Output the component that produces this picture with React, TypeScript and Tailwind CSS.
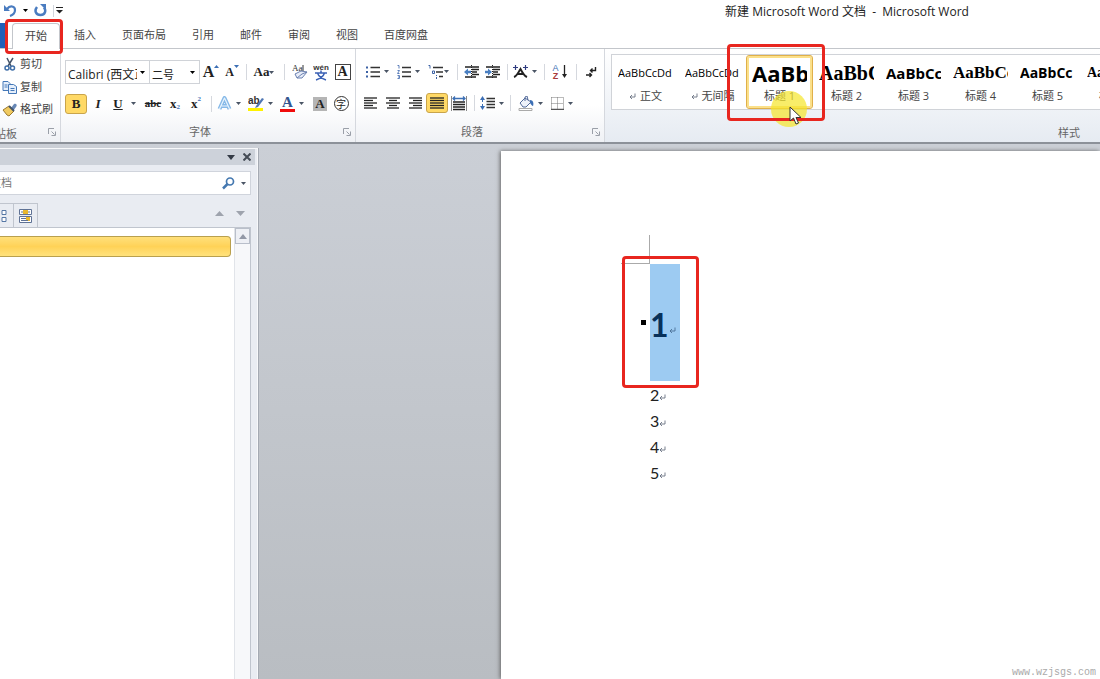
import type { ReactNode } from 'react'
import clsx from 'clsx'

const Arrow = ({ className = 'text-gray-600' }: { className?: string }) => (
  <svg width="5" height="3" viewBox="0 0 5 3" className={clsx('shrink-0', className)}>
    <path d="M0 0h5L2.5 3z" fill="currentColor" />
  </svg>
)

const Return = ({ className }: { className?: string }) => (
  <svg width="7" height="7" viewBox="0 0 7 7" fill="none" stroke="currentColor" className={className}>
    <path d="M6 0.500v3.500H1M3 2L1 4l2 2" strokeWidth="0.900" />
  </svg>
)

const Separator = ({ className }: { className: string }) => (
  <div className={clsx('flex shrink-0 justify-center', className)}>
    <div className="h-4 w-px bg-[#d5d8de]" />
  </div>
)

type ToolProps = {
  label: string
  width: string
  arrow?: boolean
  active?: boolean
  children: ReactNode
}

const Tool = ({ label, width, arrow, active, children }: ToolProps) => (
  <button
    type="button"
    aria-label={label}
    className={clsx(
      'flex h-5 shrink-0 items-center justify-center font-["Liberation_Serif",serif] text-[#222]',
      arrow ? 'gap-1' : '',
      active ? 'rounded-[3px] border border-[#c9a44b] bg-[#ffd966]' : '',
      width
    )}
  >
    {children}
    {arrow && <Arrow />}
  </button>
)

const Launcher = ({ label }: { label: string }) => (
  <button type="button" aria-label={label} className="absolute right-1 bottom-1.5">
    <svg width="8" height="8" viewBox="0 0 8 8" fill="none" stroke="#9a9fa8">
      <path d="M0.500 6V0.500H6M3.500 3.500l3 3M7.500 3.500v4h-4" />
    </svg>
  </button>
)

const Lines = ({ rows }: { rows: number[][] }) => (
  <svg width="14" height="12" viewBox="0 0 14 12" stroke="#222" strokeWidth="1.3">
    {rows.map(([from, to], i) => (
      <path key={i} d={`M${from} ${i * 2.5 + 1}H${to}`} />
    ))}
  </svg>
)

const full = [[0, 14], [0, 14], [0, 14], [0, 14], [0, 14]]

const Indent = ({ out }: { out?: boolean }) => (
  <svg width="16" height="14" viewBox="0 0 16 14">
    <path d="M1 2h14M8 4.500h7M8 7h5M8 9.500h7M1 12h11" stroke="#222" strokeWidth="1.500" />
    <path d={out ? 'M0 7l4-3.5v2.3h3v2.4H4v2.3z' : 'M7 7L3 3.5v2.3H0v2.4h3v2.3z'} fill="#4a7fc1" />
    <path d="M7.500 0v14" stroke="#222" strokeDasharray="1 1" />
  </svg>
)

const RedFrame = ({ className }: { className: string }) => (
  <div className={clsx('pointer-events-none absolute z-10 rounded border-3 border-[#e8261f]', className)} />
)

const tabs = ['插入', '页面布局', '引用', '邮件', '审阅', '视图', '百度网盘']

const styles = [
  { name: '正文', mark: true, sample: 'AaBbCcDd', font: 'text-[11px]' },
  { name: '无间隔', mark: true, sample: 'AaBbCcDd', font: 'text-[11px]' },
  { name: '标题 1', sample: 'AaBb', font: 'text-[22px] font-bold', selected: true },
  { name: '标题 2', sample: 'AaBbC', font: 'text-xl font-bold font-["Liberation_Serif",serif]' },
  { name: '标题 3', sample: 'AaBbCc', font: 'text-[15px] font-bold' },
  { name: '标题 4', sample: 'AaBbCc', font: 'text-[17px] font-bold font-["Liberation_Serif",serif]' },
  { name: '标题 5', sample: 'AaBbCc', font: 'text-sm font-bold' },
  { name: '标题 6', sample: 'AaBbCc', font: 'text-sm font-bold font-["Liberation_Serif",serif]' },
]

const TitleBar = () => (
  <header className="flex h-[23px] items-center">
    <div className="flex w-[594px] shrink-0 items-center pb-0.5 pl-1">
      <button type="button" aria-label="撤消" className="flex items-center gap-1.5">
        <svg width="13" height="13" viewBox="0 0 13 13" fill="none" stroke="#4a7cc0" strokeWidth="2.200">
          <path d="M3 5c3-4 8-3 8 1 0 3-2 5-5 6" />
          <path d="M0 1v6h6z" fill="#4a7cc0" stroke="none" />
        </svg>
        <Arrow className="text-black" />
      </button>
      <button type="button" aria-label="恢复" className="ml-1.5">
        <svg width="13" height="13" viewBox="0 0 13 13" fill="none" stroke="#4a7cc0" strokeWidth="2.500">
          <path d="M3 3c-3 4-1 8 3.500 8s6-4 3.500-7.500" />
          <path d="M6 0h6v6z" fill="#4a7cc0" stroke="none" />
        </svg>
      </button>
      <div className="mr-0.5 ml-1.5 h-3 w-px bg-gray-300" />
      <button type="button" aria-label="自定义快速访问工具栏">
        <svg width="7" height="7" viewBox="0 0 7 7">
          <path d="M0 0.500h7" stroke="#222" />
          <path d="M0 3h7L3.500 6.500z" fill="#222" />
        </svg>
      </button>
    </div>
    <h1 className="flex-1 text-center text-xs whitespace-pre text-[#222]">
      新建 Microsoft Word 文档  -  Microsoft Word
    </h1>
  </header>
)

const Tabs = () => (
  <nav className="flex h-[26px] items-stretch border-b border-[#c3c6cb] text-[11px] text-[#444]">
    <button type="button" aria-label="文件" className="-ml-12 w-14 bg-[#2160b8]" />
    <div className="relative -mb-px ml-1 flex w-12 justify-center rounded-t border border-b-0 border-[#c3c6cb] bg-white">
      <button type="button">开始</button>
      <RedFrame className="-top-[5px] -right-1 -bottom-[5px] -left-2" />
    </div>
    <div className="ml-3.5 flex gap-[26px]">
      {tabs.map((tab) => (
        <button type="button" key={tab}>{tab}</button>
      ))}
    </div>
  </nav>
)

const Clipboard = () => (
  <section className="relative flex w-[61px] shrink-0 flex-col border-r border-[#d5d8de] pt-1 text-[11px] text-[#444]">
    <button type="button" className="flex h-[23px] items-center gap-1 pl-1 whitespace-nowrap">
      <svg width="12" height="14" viewBox="0 0 12 14" fill="none" stroke="#3f6ea8" strokeWidth="1.500">
        <path d="M3 1l4 8M9 1L4 9" stroke="#44546a" />
        <circle cx="3" cy="11" r="2" />
        <circle cx="8.500" cy="11" r="2" />
      </svg>
      剪切
    </button>
    <button type="button" className="flex h-[23px] items-center gap-0.5 pl-0.5 whitespace-nowrap">
      <svg width="16" height="14" viewBox="0 0 16 14" fill="#e6effb" stroke="#4478b8">
        <path d="M1 1.500h5l2 2v7H1z" />
        <path d="M6.500 4.500h5l3 2v7h-8z" />
        <path d="M2.500 5h3M2.500 7h3M8.500 8.500h4M8.500 10.500h4" />
      </svg>
      复制
    </button>
    <button type="button" className="flex h-[23px] items-center gap-0.5 pl-0.5 whitespace-nowrap">
      <svg width="16" height="14" viewBox="0 0 16 14">
        <path d="M9 5l3-4c1-1 4 0 2 3l-3 4z" fill="#6787b5" />
        <path d="M1 7l6-4 5 5-5 5-2-1z" fill="#f0ca60" stroke="#9b7930" />
        <path d="M7 3l5 5" stroke="#44546a" strokeWidth="2" />
      </svg>
      格式刷
    </button>
    <div className="-ml-4 pt-[5px] leading-4 text-[#666]">剪贴板</div>
    <Launcher label="剪贴板选项" />
  </section>
)

const FontGroup = () => (
  <section className="relative flex w-[295px] shrink-0 flex-col border-r border-[#d5d8de] pt-[11px] pl-1">
    <div className="flex h-6 items-center">
      <div className="relative h-6 w-[85px] border border-[#d0d3d8]">
        <select aria-label="字体" className="h-full w-full appearance-none overflow-hidden pr-3 pb-1 pl-0.5 text-xs text-[#222] outline-none">
          <option>Calibri (西文正文)</option>
        </select>
        <Arrow className="absolute top-2.5 right-1" />
      </div>
      <div className="relative h-6 w-[50px] border border-l-0 border-[#d0d3d8]">
        <select aria-label="字号" className="h-full w-full appearance-none pr-3 pb-1 pl-0.5 text-[11px] text-[#222] outline-none">
          <option>二号</option>
        </select>
        <Arrow className="absolute top-2.5 right-1" />
      </div>
      <Tool label="增大字体" width="w-[22px]">
        <b className="text-base">A</b>
        <Arrow className="mb-3 rotate-180 text-[#3c6fb5]" />
      </Tool>
      <Tool label="缩小字体" width="w-5">
        <b className="text-xs">A</b>
        <Arrow className="mb-3 text-[#3c6fb5]" />
      </Tool>
      <Separator className="w-2" />
      <Tool label="更改大小写" width="w-7" arrow><b className="-mr-1 text-[13px]">Aa</b></Tool>
      <Separator className="w-3" />
      <Tool label="清除格式" width="w-5">
        <svg width="16" height="16" viewBox="0 0 16 16">
          <text x="0" y="7" fontSize="9" fontFamily="Liberation Serif" fill="#333">Aa</text>
          <path d="M11 1v6" stroke="#333" />
          <path d="M3 10l6-3 6 1-5 6-5 0z" fill="#e8edf8" stroke="#6a80b0" />
          <path d="M5 14l5-4 5-2" stroke="#6a80b0" fill="none" />
        </svg>
      </Tool>
      <Tool label="拼音指南" width="w-[22px]">
        <svg width="16" height="17" viewBox="0 0 16 17">
          <text x="8" y="6" textAnchor="middle" fontSize="8" fontWeight="bold" fontFamily="Liberation Sans" fill="#333">wén</text>
          <path d="M2 9h12M8 6.500V9M4.500 9c1 3 4 5.500 8.500 7M11.500 9c-1 3-4 5.500-8.500 7" fill="none" stroke="#3c62b5" strokeWidth="1.500" />
        </svg>
      </Tool>
      <Tool label="字符边框" width="w-[21px]">
        <b className="h-4 w-4 border border-[#444] text-sm leading-[14px]">A</b>
      </Tool>
    </div>
    <div className="mt-2 flex h-6 items-center text-[13px]">
      <Tool label="加粗" width="w-[22px]" active><b>B</b></Tool>
      <Tool label="倾斜" width="w-[22px]"><b className="italic">I</b></Tool>
      <Tool label="下划线" width="w-[31px]" arrow><b className="mr-1 underline">U</b></Tool>
      <Tool label="删除线" width="w-[26px]"><b className="text-[11px] line-through">abc</b></Tool>
      <Tool label="下标" width="w-[18px]">
        <b>x</b><span className="mt-2 text-[7px] font-bold text-[#3c6fb5]">2</span>
      </Tool>
      <Tool label="上标" width="w-6">
        <b>x</b><span className="mb-2 text-[7px] font-bold text-[#3c6fb5]">2</span>
      </Tool>
      <Separator className="w-1.5" />
      <Tool label="文本效果" width="w-[30px]" arrow>
        <svg width="15" height="15" viewBox="0 0 14 15" fill="none" strokeLinejoin="round">
          <path d="M2 13L7 2l5 11M4 10h6" stroke="#86b9e8" strokeWidth="4" />
          <path d="M2 13L7 2l5 11M4 10h6" stroke="#e8f4fd" strokeWidth="1.200" />
        </svg>
      </Tool>
      <Tool label="突出显示" width="w-8" arrow>
        <svg width="16" height="16" viewBox="0 0 16 16">
          <path d="M0 12h15v3H0z" fill="#fff200" />
          <text x="0" y="8" fontSize="10" fontWeight="bold" fontFamily="Liberation Sans" fill="#333">ab</text>
          <path d="M8 10l6-8 2 1-6 8-3 1z" fill="#5077b3" />
        </svg>
      </Tool>
      <Tool label="字体颜色" width="w-8" arrow>
        <span className="border-b-3 border-[#f00c0c] px-0.5 text-[15px] leading-[13px] font-bold text-[#32558f]">A</span>
      </Tool>
      <Tool label="字符底纹" width="w-6">
        <b className="h-3.5 w-3.5 bg-[#b5b5b5] leading-[14px]">A</b>
      </Tool>
      <Tool label="带圈字符" width="w-[18px]">
        <span className="h-[15px] w-[15px] rounded-full border border-[#333] font-['Noto_Sans_CJK_SC',sans-serif] text-[10px] leading-[13px]">字</span>
      </Tool>
    </div>
    <div className="pt-[7px] text-center text-[11px] leading-5 text-[#666]">
      <span className="mr-5">字体</span>
    </div>
    <Launcher label="字体选项" />
  </section>
)

const ParagraphGroup = () => (
  <section className="relative flex w-[249px] shrink-0 flex-col border-r border-[#d5d8de] pt-[11px] pl-1">
    <div className="flex h-6 items-center pl-0.5">
      <Tool label="项目符号" width="w-[30px]" arrow>
        <svg width="14" height="12" viewBox="0 0 14 12">
          <path d="M4.500 1.500h9.500M4.500 6h9.500M4.500 10.500h9.500" stroke="#333" strokeWidth="1.300" />
          <path d="M0 0.500h2v2H0zM0 5h2v2H0zM0 9.500h2v2H0z" fill="#3c62a5" />
        </svg>
      </Tool>
      <Tool label="编号" width="w-8" arrow>
        <svg width="14" height="14" viewBox="0 0 14 14">
          <path d="M5 2.500h9M5 7h9M5 11.500h9" stroke="#333" strokeWidth="1.300" />
          <path d="M0.500 0.500H2v3M0.500 5.500H2.500L0.500 8.500h2M0.500 10.500h2v3h-2M1 12h1.500" stroke="#5c7fba" fill="none" />
        </svg>
      </Tool>
      <Tool label="多级列表" width="w-7" arrow>
        <svg width="16" height="14" viewBox="0 0 16 14" className="-mr-1 shrink-0">
          <path d="M5 2.500h10M8 7h7M11 11.500h4" stroke="#333" strokeWidth="1.300" />
          <path d="M0.500 0.500H2v3M4.500 6h2v2.500h-2zM8.500 10v1M8.500 12v2" stroke="#3c62a5" fill="none" />
        </svg>
      </Tool>
      <Separator className="w-2.5" />
      <Tool label="减少缩进量" width="w-5"><Indent out /></Tool>
      <Tool label="增加缩进量" width="w-[22px]"><Indent /></Tool>
      <Separator className="w-1.5" />
      <Tool label="中文版式" width="w-[30px]" arrow>
        <svg width="15" height="13" viewBox="0 0 15 13" fill="none" stroke="#222" strokeWidth="1.900">
          <path d="M1 12c3-1 4-4 6.500-8 2 4 4 7 6.500 8M4.500 9h6" />
          <path d="M0 2.500h5M2.500 0v5M10 2.500h5M12.500 0v5" stroke="#303c80" strokeWidth="1.200" />
        </svg>
      </Tool>
      <Separator className="w-2" />
      <Tool label="排序" width="w-6">
        <span className="flex flex-col font-['Liberation_Sans',sans-serif] text-[9px] leading-[8px]">
          <span className="text-[#3c6fb5]">A</span>
          <span className="font-bold text-[#a83c3c]">Z</span>
        </span>
        <svg width="7" height="14" viewBox="0 0 7 14" className="ml-0.5">
          <path d="M3.500 0v11" stroke="#222" strokeWidth="1.300" />
          <path d="M1 9h5l-2.500 4z" fill="#222" />
        </svg>
      </Tool>
      <Separator className="w-2" />
      <Tool label="显示编辑标记" width="w-[22px]">
        <svg width="11" height="12" viewBox="0 0 11 12" fill="none" stroke="#222" strokeWidth="1.400">
          <path d="M9.500 1v3.500H5M6.500 2.500l-2 2 2 2M0 9h5M3.500 7l2 2-2 2" />
        </svg>
      </Tool>
    </div>
    <div className="mt-2 flex h-6 items-center">
      <Tool label="左对齐" width="w-[22px]"><Lines rows={[[0, 13], [0, 9], [0, 13], [0, 9], [0, 13]]} /></Tool>
      <Tool label="居中" width="w-[22px]"><Lines rows={[[0, 14], [3, 11], [0, 14], [3, 11], [1, 13]]} /></Tool>
      <Tool label="右对齐" width="w-[22px]"><Lines rows={[[1, 14], [5, 14], [1, 14], [5, 14], [1, 14]]} /></Tool>
      <Tool label="两端对齐" width="w-[22px]" active><Lines rows={full} /></Tool>
      <Tool label="分散对齐" width="w-[22px]">
        <svg width="16" height="15" viewBox="0 0 16 15" fill="none">
          <path d="M2 6h12M2 8.500h12M2 11h12M2 13.500h12" stroke="#222" strokeWidth="1.300" />
          <path d="M0.500 0v15M15.500 0v15" stroke="#888" />
          <path d="M2 2.500h12M4 0.500l-2 2 2 2M12 0.500l2 2-2 2" stroke="#3c6fb5" strokeWidth="1.300" />
        </svg>
      </Tool>
      <Separator className="w-2" />
      <Tool label="行距" width="w-7" arrow>
        <svg width="15" height="14" viewBox="0 0 15 14">
          <path d="M6.500 2.500H15M6.500 5.500H15M6.500 8.500H15M6.500 11.500H15" stroke="#333" strokeWidth="1.300" />
          <path d="M2.500 2v10" stroke="#3c6fb5" strokeDasharray="4 2" />
          <path d="M0 4l2.500-4L5 4zM0 10l2.500 4L5 10z" fill="#3c6fb5" />
        </svg>
      </Tool>
      <Separator className="w-2" />
      <Tool label="底纹" width="w-8" arrow>
        <svg width="16" height="15" viewBox="0 0 16 15">
          <path d="M2 7l5-5 6 4-5 5H5z" fill="#eef2fa" stroke="#526a9a" />
          <path d="M7 5V1l2-1 1 4" fill="none" stroke="#526a9a" />
          <path d="M12 4c3 0 4 3 3 6-1 0-2-2-3-3z" fill="#3c6fb5" />
          <path d="M1 12.500h13v2H1z" fill="#fff" stroke="#aaa" />
        </svg>
      </Tool>
      <Tool label="边框" width="w-8" arrow>
        <svg width="13" height="13" viewBox="0 0 13 13" stroke="#777" fill="none">
          <path d="M0.500 0.500h12M0.500 0.500v12M12.500 0.500v12M6.500 0.500v12M0.500 6.500h12" strokeDasharray="1 1" />
          <path d="M0 12.500h13" strokeWidth="1.500" stroke="#555" />
        </svg>
      </Tool>
    </div>
    <div className="pt-[7px] text-center text-[11px] leading-5 text-[#666]">
      <span className="mr-5">段落</span>
    </div>
    <Launcher label="段落选项" />
  </section>
)

const StylesGroup = () => (
  <section className="min-w-0 flex-1 bg-gradient-to-b from-white to-[#e6ebf2] pt-[5px] pl-1.5">
    <div className="flex h-14 w-max border border-[#d0d3d8] bg-white">
      {styles.map((style) => (
        <div key={style.name} className="relative w-[67px] shrink-0">
          <button
            type="button"
            className={clsx(
              'flex h-full w-full flex-col items-center justify-between border px-[5px] pb-1',
              style.selected ? 'rounded-[3px] border-[#e0b04a] shadow-[inset_0_0_0_2px_#fbe08a]' : 'border-transparent'
            )}
          >
            <span className={clsx('flex h-8 w-[55px] items-center overflow-hidden pt-0.5 text-black', style.font)}>{style.sample}</span>
            <span className="flex items-center gap-1 text-[11px] leading-4 whitespace-nowrap text-[#444]">
              {style.mark && <Return className="text-gray-500" />}
              {style.name}
            </span>
          </button>
          {style.selected && (
            <>
              <div className="pointer-events-none absolute top-9 left-[25px] h-9 w-9 rounded-full bg-[#f5e52a]/70" />
              <RedFrame className="-top-[11px] -right-3 -bottom-3 -left-[19px]" />
              <svg width="13" height="19" viewBox="0 0 13 19" className="absolute top-[51px] left-[43px] z-20">
                <path d="M1 1v14l3.500-3 2.500 6 2.500-1-2.500-5.500h5z" fill="#fff" stroke="#333" />
              </svg>
            </>
          )}
        </div>
      ))}
    </div>
    <div className="pt-[13px] pr-5 text-right text-[11px] leading-5 text-[#666]">样式</div>
  </section>
)

const NavigationPane = () => (
  <aside className="mt-1 flex w-[258px] shrink-0 flex-col border-t border-r border-[#f7f8fa] bg-[#e9ecf2] shadow-[1px_0_0_#a5aab3]">
    <div className="mr-0.5 flex h-4 items-center justify-end gap-2 bg-[#cdd2da] pr-1">
      <svg width="8" height="5" viewBox="0 0 8 5"><path d="M0 0h8L4 5z" fill="#333a45" /></svg>
      <button type="button" aria-label="关闭">
        <svg width="8" height="8" viewBox="0 0 8 8" stroke="#444b55" strokeWidth="2"><path d="M0.500 0.500l7 7M7.500 0.500l-7 7" /></svg>
      </button>
    </div>
    <div className="mt-1.5 mr-1.5 -ml-10 flex h-6 items-center border border-[#d0d4dc] bg-white pr-1">
      <input
        aria-label="搜索文档"
        placeholder="搜索文档"
        className="min-w-0 flex-1 pl-[7px] text-[11px] outline-none placeholder:text-[#777]"
      />
      <svg width="13" height="13" viewBox="0 0 13 13" fill="none" stroke="#4478b0" className="mr-1.5">
        <circle cx="8" cy="4.500" r="3.500" strokeWidth="1.700" />
        <path d="M5.500 7L1 11.500" strokeWidth="2.500" />
      </svg>
      <Arrow />
    </div>
    <div className="mt-2 flex h-6 items-stretch">
      <button type="button" aria-label="浏览页面" className="flex w-[13px] items-center border-t border-[#c0c5ce]">
        <svg width="7" height="14" viewBox="0 0 7 14" fill="#fff" stroke="#5677a5"><path d="M2 1.500h4v4H2zM2 8.500h4v4H2z" /></svg>
      </button>
      <button type="button" aria-label="浏览搜索结果" className="flex w-[25px] items-center justify-center border border-b-0 border-[#c0c5ce]">
        <svg width="13" height="14" viewBox="0 0 13 14">
          <path d="M0.500 0.500h12v5H0.500zM0.500 7.500h12v6H0.500z" fill="#fff" stroke="#5f7295" />
          <path d="M4 1h5v4H4zM7 8h4v4H7z" fill="#e9b82f" />
          <path d="M2 9.500h5M2 11.500h7M2 3h2M9 3h2" stroke="#5f7295" />
        </svg>
      </button>
      <div className="flex flex-1 items-center justify-end gap-3 pr-3 pb-1 text-[#9ea3ad]">
        <svg width="9" height="5" viewBox="0 0 9 5"><path d="M0 5h9L4.500 0z" fill="currentColor" /></svg>
        <svg width="9" height="5" viewBox="0 0 9 5"><path d="M0 0h9L4.500 5z" fill="currentColor" /></svg>
      </div>
    </div>
    <div className="mr-1.5 flex flex-1 border-t border-r border-[#c0c5ce] bg-white">
      <div className="flex-1 pt-2 pr-[3px]">
        <div className="h-[21px] rounded-r border border-l-0 border-[#b9a04e] bg-gradient-to-b from-[#ffe07a] via-[#ffd257] to-[#ffe27c]" />
      </div>
      <div className="w-4 border-l border-[#e1e4e9] bg-[#f7f8fa]">
        <button type="button" aria-label="向上滚动" className="flex h-4 w-full items-center justify-center border border-[#b9bfca] bg-[#eef0f5]">
          <svg width="8" height="5" viewBox="0 0 8 5"><path d="M0 5h8L4 0z" fill="#9298a6" /></svg>
        </button>
      </div>
    </div>
  </aside>
)

const Page = () => (
  <main className="relative min-w-0 flex-1 bg-white pt-[84px] pl-[120px] font-[Lato,sans-serif] text-[#222] shadow-[-1px_0_4px_#666]">
    <div className="h-[29px] w-[29px] border-r border-b border-[#aaa]" />
    <div className="ml-[29px]">
      <div className="relative flex h-[117px] w-[30px] items-center bg-[#9dcbf2] text-[#08315a]">
        <span className="absolute right-full mr-1 h-[5px] w-[5px] bg-black" />
        <h2 className="pt-1 text-[32px] leading-10 font-bold">1</h2>
        <Return className="mt-4 shrink-0 text-[#4a7095]" />
        <RedFrame className="-top-2 -right-[19px] -bottom-[7px] -left-7" />
      </div>
      <div className="pt-px">
        {[2, 3, 4, 5].map((line) => (
          <p key={line} className="flex items-center text-base leading-[26px]">
            {line}
            <Return className="mt-1 text-gray-500" />
          </p>
        ))}
      </div>
    </div>
    <p className="absolute right-1 bottom-0 font-['Liberation_Mono',monospace] text-[10px] leading-3 text-[#aaa]">
      www.wzjsgs.com
    </p>
  </main>
)

const App = () => {
  return (
    <div className="flex min-h-screen flex-col overflow-hidden bg-white font-['Open_Sans','Noto_Sans_CJK_SC',sans-serif]">
      <TitleBar />
      <Tabs />
      <div className="flex h-[95px] border-b-2 border-[#8c9199] bg-gradient-to-b from-white from-60% to-[#eff1f5]">
        <Clipboard />
        <FontGroup />
        <ParagraphGroup />
        <StylesGroup />
      </div>
      <div className="flex flex-1 bg-gradient-to-b from-[#cbcfd6] to-[#b9bdc2]">
        <NavigationPane />
        <div className="flex min-w-0 flex-1 pt-[7px] pl-[243px]">
          <Page />
        </div>
      </div>
    </div>
  )
}

export default App
